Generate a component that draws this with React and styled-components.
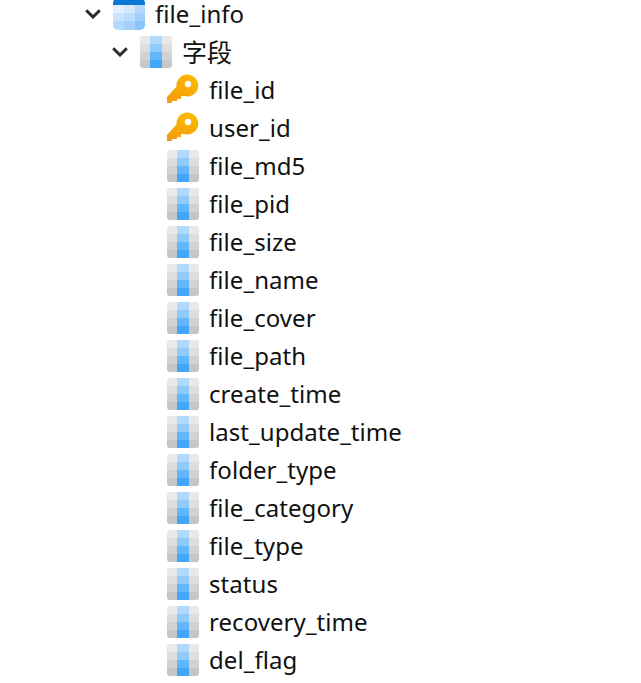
import React from "react";
import styled, { createGlobalStyle } from "styled-components";

const Global = createGlobalStyle`
  html, body { margin: 0; padding: 0; background: #fff; overflow: hidden; }
  body { font-family: "Noto Sans", "Noto Sans CJK SC", sans-serif; }
`;

const Tree = styled.div`
  display: flex;
  flex-direction: column;
  margin-top: -5px;
  width: 641px;
  height: 688px;
  overflow: hidden;
`;

const Row = styled.div`
  display: flex;
  align-items: center;
  height: 38px;
  flex: none;
  padding-left: ${(p) => p.$indent}px;
`;

const Chevron = styled.svg`
  width: 16px;
  height: 10px;
  margin-right: 12px;
  flex: none;
`;

const IconBox = styled.svg`
  width: 32px;
  height: 32px;
  flex: none;
  margin-right: 10px;
`;

const Label = styled.span`
  font-size: ${(p) => p.$size || 24}px;
  line-height: 26px;
  margin-top: -1px;
  letter-spacing: ${(p) => (p.$size ? 0 : 0.06)}px;
  color: #111;
  white-space: nowrap;
`;

const Arrow = () => (
  <Chevron viewBox="0 0 16 10">
    <path d="M1.2 1.2 L8 8 L14.8 1.2" fill="none" stroke="#2b2b2b" strokeWidth="3" />
  </Chevron>
);

const TableIcon = () => (
  <IconBox viewBox="0 0 32 32">
    <defs>
      <clipPath id="tbl"><rect width="32" height="32" rx="5" /></clipPath>
    </defs>
    <g clipPath="url(#tbl)">
      <rect width="32" height="7" fill="#0a78d2" />
      <rect y="7" width="11" height="8" fill="#e1efff" />
      <rect x="11" y="7" width="11" height="8" fill="#d3e8fd" />
      <rect x="22" y="7" width="10" height="8" fill="#b3dafd" />
      <rect y="15" width="11" height="8" fill="#cbe4fd" />
      <rect x="11" y="15" width="11" height="8" fill="#bcdcfc" />
      <rect x="22" y="15" width="10" height="8" fill="#a0d0fb" />
      <rect y="23" width="11" height="9" fill="#b3d9fc" />
      <rect x="11" y="23" width="11" height="9" fill="#a3d1fb" />
      <rect x="22" y="23" width="10" height="9" fill="#8ac5fa" />
    </g>
  </IconBox>
);

const ColumnIcon = () => (
  <IconBox viewBox="0 0 32 32">
    <defs>
      <clipPath id="col"><rect width="32" height="32" rx="3" /></clipPath>
    </defs>
    <g clipPath="url(#col)">
      <rect width="10" height="8" fill="#e9e9e9" />
      <rect x="22" width="10" height="8" fill="#e9e9e9" />
      <rect y="8" width="10" height="8" fill="#dedede" />
      <rect x="22" y="8" width="10" height="8" fill="#dedede" />
      <rect y="16" width="10" height="8" fill="#d2d2d2" />
      <rect x="22" y="16" width="10" height="8" fill="#d2d2d2" />
      <rect y="24" width="10" height="8" fill="#c6c6c6" />
      <rect x="22" y="24" width="10" height="8" fill="#c6c6c6" />
      <rect x="10" width="12" height="8" fill="#b0d9fd" />
      <rect x="10" y="8" width="12" height="8" fill="#90cbfb" />
      <rect x="10" y="16" width="12" height="8" fill="#62b6fb" />
      <rect x="10" y="24" width="12" height="8" fill="#42a7fa" />
    </g>
  </IconBox>
);

const KeyIcon = () => (
  <IconBox viewBox="0 0 32 32">
    <defs>
      <linearGradient id="keyGrad" x1="0.8" y1="0" x2="0.1" y2="1">
        <stop offset="0" stopColor="#fcb900" />
        <stop offset="1" stopColor="#f59a0f" />
      </linearGradient>
    </defs>
    <path
      fillRule="evenodd"
      fill="url(#keyGrad)"
      d="M20 0.5 A11 11 0 1 1 17 22 L14 22 L14 25 L10 25 L10 27 L5 27 L5 29 L0 29 L0 23 L9.5 12.5 A11 11 0 0 1 20 0.5 Z M21 6.8 A3.2 3.2 0 1 0 21 13.2 A3.2 3.2 0 1 0 21 6.8 Z"
    />
  </IconBox>
);

const fields = [
  ["file_id", true],
  ["user_id", true],
  ["file_md5"],
  ["file_pid"],
  ["file_size"],
  ["file_name"],
  ["file_cover"],
  ["file_path"],
  ["create_time"],
  ["last_update_time"],
  ["folder_type"],
  ["file_category"],
  ["file_type"],
  ["status"],
  ["recovery_time"],
  ["del_flag"],
];

export default function App() {
  return (
    <>
      <Global />
      <Tree>
        <Row $indent={85}>
          <Arrow />
          <TableIcon />
          <Label>file_info</Label>
        </Row>
        <Row $indent={112}>
          <Arrow />
          <ColumnIcon />
          <Label $size={25}>字段</Label>
        </Row>
        {fields.map(([name, isKey]) => (
          <Row key={name} $indent={167}>
            {isKey ? <KeyIcon /> : <ColumnIcon />}
            <Label>{name}</Label>
          </Row>
        ))}
      </Tree>
    </>
  );
}
